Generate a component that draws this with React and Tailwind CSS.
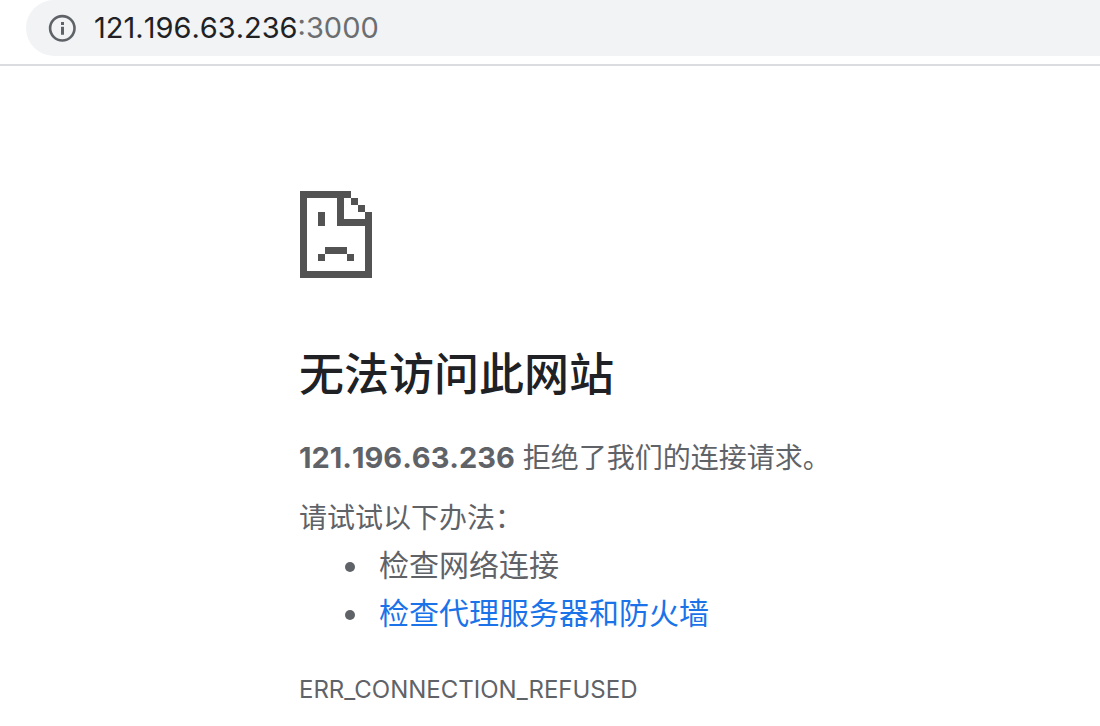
function InfoIcon() {
  return (
    <svg width="28" height="28" viewBox="0 0 28 28" fill="none" aria-hidden="true">
      <circle cx="14.3" cy="14.3" r="12.2" stroke="#5f6368" strokeWidth="2.6" />
      <path d="M13 8h3v3h-3zM13 12.7h3v8h-3z" fill="#5f6368" />
    </svg>
  );
}

function SadPageIcon() {
  return (
    <svg
      width="72"
      height="87"
      viewBox="0 0 72 87"
      fill="#535353"
      fillRule="evenodd"
      shapeRendering="crispEdges"
      aria-hidden="true"
    >
      <path d="M0 0H51V7H44V28H65V21H72V87H0ZM7 7V80H65V35H37V7Z" />
      <path d="M51 7h7v7h-7zM58 14h7v7h-7zM18 21h7v14h-7zM25 56h22v7h-22zM18 63h7v7h-7zM47 63h7v7h-7z" />
    </svg>
  );
}

export default function App() {
  return (
    <div className="min-h-screen bg-white font-['Inter','Noto_Sans_CJK_SC',sans-serif] text-[#5f6368]">
      <header className="border-b-2 border-[#dadce0] pb-2 pl-[26px]">
        <div className="flex h-14 items-center gap-[18px] rounded-l-full bg-[#f1f3f4] pl-[22px]">
          <button type="button" aria-label="查看网站信息" className="shrink-0">
            <InfoIcon />
          </button>
          <div
            role="textbox"
            aria-label="地址栏"
            contentEditable
            suppressContentEditableWarning
            spellCheck={false}
            className="grow text-[29px] leading-8 text-[#6b6e71] [font-kerning:none] outline-none"
          >
            <span className="text-[#202124]">121.196.63.236</span>:3000
          </div>
        </div>
      </header>
      <main className="pt-[125px] pl-[299px]" lang="zh-CN">
        <div className="pl-px">
          <SadPageIcon />
        </div>
        <h1 className="mt-[65px] text-[45px] leading-[64px] font-medium text-[#202124]">无法访问此网站</h1>
        <p className="mt-[31px] text-[28px] leading-10">
          <strong className="text-[29px] font-bold [font-kerning:none]">121.196.63.236</strong> 拒绝了我们的连接请求。
        </p>
        <p className="mt-5 text-[28px] leading-10">请试试以下办法：</p>
        <ul className="mt-[3px] list-disc pl-[72px] text-[30px] leading-[48px]">
          <li className="pl-2">检查网络连接</li>
          <li className="pl-2">
            <a href="#buttons" className="text-[#1a73e8]">
              检查代理服务器和防火墙
            </a>
          </li>
        </ul>
        <p className="mt-[37px] text-2xl">ERR_CONNECTION_REFUSED</p>
      </main>
    </div>
  );
}
